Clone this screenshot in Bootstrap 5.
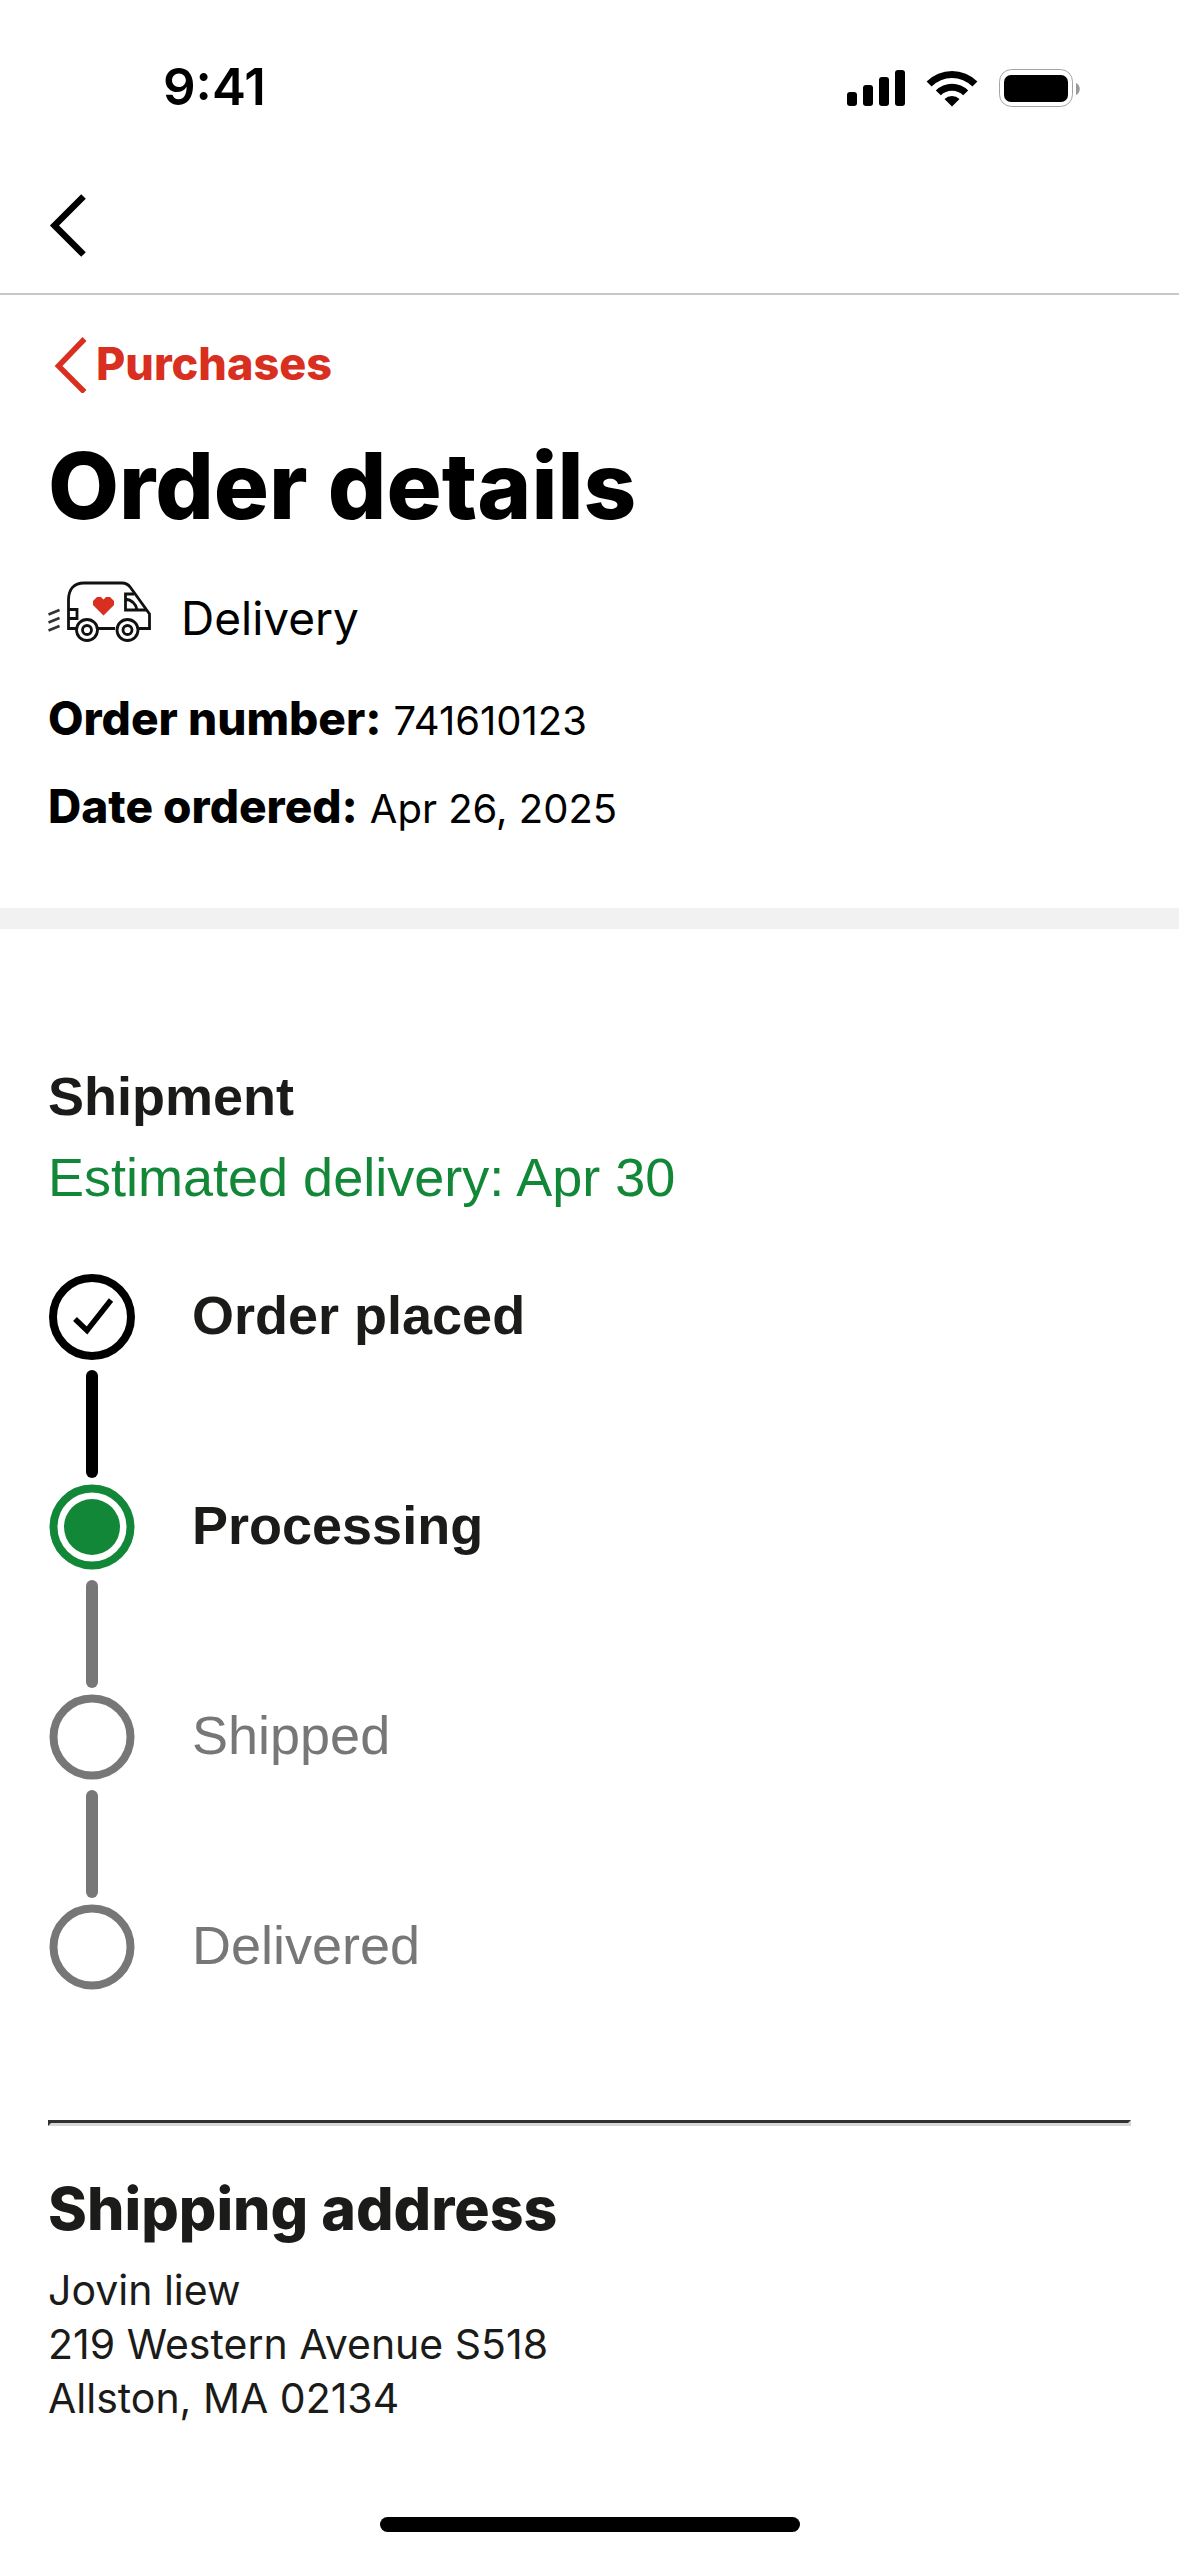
<!DOCTYPE html>
<html lang="en">
<head>
<meta charset="utf-8">
<meta name="viewport" content="width=device-width, initial-scale=1">
<title>Order details</title>
<link href="https://cdn.jsdelivr.net/npm/bootstrap@5.3.0/dist/css/bootstrap.min.css" rel="stylesheet">
<style>
  :root { --ink: #1b1b19; --green: #128738; --muted: #777; --red: #d92f20; }
  body { font-family: Inter, "Liberation Sans", sans-serif; color: #000; background: #fff; }
  svg { display: block; flex: none; }
  .gutter { padding-left: 48px; padding-right: 48px; }
  .status-bar { height: 174px; padding: 1px 98px 0 163px; font-size: 51px; font-weight: 600; }
  .status-icons { gap: 21px; }
  .top-bar { padding-top: 20px; padding-bottom: 36px; border-bottom: 2px solid #c8c8c8; }
  .back-link { color: var(--red); gap: 8px; padding-left: 6px; font-size: 45px; line-height: 60px; font-weight: 800; }
  .order-head { padding-top: 39px; padding-bottom: 69px; }
  .page-title { font-size: 92px; line-height: 110px; font-weight: 800; margin: 37px 0 40px; }
  .method { gap: 29px; font-size: 46px; line-height: 60px; margin-bottom: 40px; }
  .facts { gap: 25px; line-height: 60px; font-size: 40px; }
  .facts dt { font-size: 46px; font-weight: 800; }
  .facts dd { margin: 0; }
  .facts > div { gap: 12px; }
  .band { height: 21px; background: #f1f1f1; }
  .shipment { padding-top: 135px; font-family: "Liberation Sans", Arial, sans-serif; font-size: 54px; line-height: 64px; color: var(--ink); }
  .shipment h2 { font-size: 54px; line-height: 64px; font-weight: 700; margin-bottom: 17px; }
  .eta { color: var(--green); margin-bottom: 65px; }
  .step { gap: 56px; min-height: 210px; line-height: 82px; }
  .step:last-child { min-height: 86px; }
  .step.done, .step.active { font-weight: 700; }
  .step.todo { color: var(--muted); }
  .connector { width: 12px; height: 108px; margin-top: 10px; border-radius: 6px; background: var(--muted); }
  .done .connector { background: #000; }
  .rule { margin: 130px 0 48px; border: 3px solid; border-color: #303030 #d6d6d6 #d6d6d6 #303030; opacity: 1; }
  .address { color: var(--ink); font-size: 41px; line-height: 54px; }
  .address address { line-height: inherit; }
  .address h2 { font-size: 59px; line-height: 70px; font-weight: 800; margin-bottom: 19px; }
  .home-bar { width: 420px; height: 15px; border-radius: 8px; background: #000; margin-bottom: 24px; }
</style>
</head>
<body class="d-flex flex-column min-vh-100">
  <div class="status-bar d-flex align-items-center justify-content-between">
    <span>9:41</span>
    <div class="status-icons d-flex align-items-center">
      <svg width="58" height="38" viewBox="0 0 58 38" role="img" aria-label="Signal"><rect y="23" width="10" height="14" rx="3"/><rect x="16" y="16" width="10" height="21" rx="3"/><rect x="32" y="8" width="10" height="29" rx="3"/><rect x="48" y="1" width="10" height="36" rx="3"/></svg>
      <svg width="52" height="38" viewBox="0 0 52 38" role="img" aria-label="Wi-Fi"><path d="M.6 12.500a36 36 0 0 1 50.800 0l-5 5a29 29 0 0 0-40.800 0zM9.800 21.400a23 23 0 0 1 32.400 0l-5 4.900a16 16 0 0 0-22.400 0zM18.500 30a10.800 10.800 0 0 1 15 0L26 37.600z"/></svg>
      <svg width="82" height="38" viewBox="0 0 82 38" role="img" aria-label="Battery"><rect x=".5" y=".5" width="73" height="37" rx="12" fill="none" stroke="#a5a5a5"/><rect x="5" y="6" width="64" height="27" rx="7"/><path d="M77 14c5 2 5 10 0 12z" fill="#999"/></svg>
    </div>
  </div>

  <nav class="top-bar gutter" aria-label="Navigation">
    <button type="button" class="btn d-block p-0 border-0" aria-label="Back">
      <svg width="40" height="63" viewBox="0 0 40 63" fill="none" stroke="#000" stroke-width="6.500"><path d="M35.500 2.500 6.500 31.500l29 29"/></svg>
    </button>
  </nav>

  <header class="order-head gutter">
    <a href="#" class="back-link d-flex align-items-center text-decoration-none">
      <svg width="34" height="58" viewBox="0 0 34 58" fill="none" stroke="currentColor" stroke-width="5.500"><path d="M30.500 4 4.500 31l26 26"/></svg>
      <span>Purchases</span>
    </a>
    <h1 class="page-title">Order details</h1>
    <div class="method d-flex align-items-end">
      <svg width="104" height="67" viewBox="0 0 104 67" fill="none" stroke="#111" stroke-width="2.800">
        <path d="M28 47.500H20.500V19C20.500 8 26 2 36 2h38c4 0 6 1 8.500 4.500L101.500 33v14.500H90M67 47.500H50"/>
        <path d="M20 28.500h9v9h-9M86 13h-8.500v16h21M77 18c7 1 11 5 12 11"/>
        <circle cx="39" cy="49" r="10.500"/><circle cx="39" cy="49" r="4.500"/>
        <circle cx="79.500" cy="49" r="10.500"/><circle cx="79.500" cy="49" r="4.500"/>
        <path d="m.5 33.500 11-4.500M.5 41.500l11-4.500M.5 49.500l11-4.500" stroke="#333"/>
        <path d="M55.500 34.500 45 24v-4l4-4h4l2.500 2.500L58 16h4l4 4v4z" fill="#d92f20" stroke="none"/>
      </svg>
      <span>Delivery</span>
    </div>
    <dl class="facts d-flex flex-column mb-0">
      <div class="d-flex align-items-baseline"><dt>Order number:</dt><dd>741610123</dd></div>
      <div class="d-flex align-items-baseline"><dt>Date ordered:</dt><dd>Apr 26, 2025</dd></div>
    </dl>
  </header>

  <div class="band"></div>

  <main>
    <section class="shipment gutter">
      <h2>Shipment</h2>
      <p class="eta">Estimated delivery: Apr 30</p>
      <ol class="list-unstyled mb-0">
        <li class="step done d-flex align-items-start">
          <div class="d-flex flex-column align-items-center">
            <svg width="88" height="86" viewBox="0 0 88 86" fill="none" stroke="#000"><circle cx="44" cy="43" r="39" stroke-width="8"/><path d="m27 45 12 11.500 24-30.500" stroke-width="5.500"/></svg>
            <div class="connector"></div>
          </div>
          <span>Order placed</span>
        </li>
        <li class="step active d-flex align-items-start">
          <div class="d-flex flex-column align-items-center">
            <svg width="88" height="86" viewBox="0 0 88 86"><circle cx="44" cy="43" r="38.500" fill="none" stroke="#128738" stroke-width="8"/><circle cx="44" cy="43" r="28" fill="#128738"/></svg>
            <div class="connector"></div>
          </div>
          <span>Processing</span>
        </li>
        <li class="step todo d-flex align-items-start">
          <div class="d-flex flex-column align-items-center">
            <svg width="88" height="86" viewBox="0 0 88 86" fill="none"><circle cx="44" cy="43" r="38.500" stroke="#777" stroke-width="8"/></svg>
            <div class="connector"></div>
          </div>
          <span>Shipped</span>
        </li>
        <li class="step todo d-flex align-items-start">
          <svg width="88" height="86" viewBox="0 0 88 86" fill="none"><circle cx="44" cy="43" r="38.500" stroke="#777" stroke-width="8"/></svg>
          <span>Delivered</span>
        </li>
      </ol>
    </section>

    <section class="address gutter">
      <hr class="rule">
      <h2>Shipping address</h2>
      <address class="mb-0">Jovin liew<br>219 Western Avenue S518<br>Allston, MA 02134</address>
    </section>
  </main>

  <div class="home-bar mt-auto mx-auto"></div>
<script src="https://cdn.jsdelivr.net/npm/bootstrap@5.3.0/dist/js/bootstrap.bundle.min.js"></script>
</body>
</html>
